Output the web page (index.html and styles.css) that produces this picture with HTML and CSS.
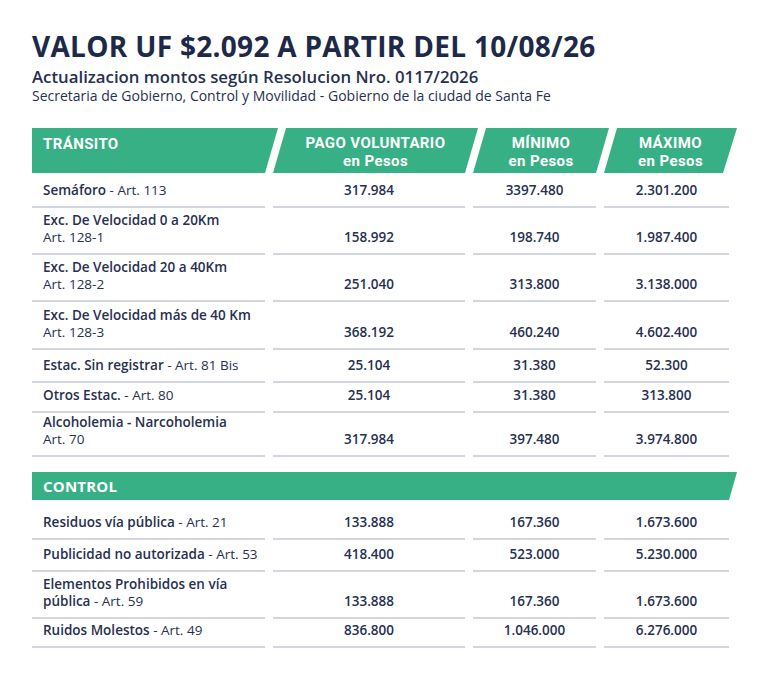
FILE: index.html
```html
<!DOCTYPE html>
<html lang="es">
<head>
<meta charset="utf-8">
<title>Valor UF</title>
<link rel="stylesheet" href="styles.css">
</head>
<body>
<div class="page">
  <header class="intro">
    <h1 class="title">VALOR UF $2.092 A PARTIR DEL 10/08/26</h1>
    <p class="subtitle">Actualizacion montos según Resolucion Nro. 0117/2026</p>
    <p class="source">Secretaria de Gobierno, Control y Movilidad - Gobierno de la ciudad de Santa Fe</p>
  </header>

  <div class="table">
    <div class="th th-first">TRÁNSITO</div>
    <div class="th">PAGO VOLUNTARIO<br>en Pesos</div>
    <div class="th">MÍNIMO<br>en Pesos</div>
    <div class="th th-last">MÁXIMO<br>en Pesos</div>

    <div class="td name"><span><b>Semáforo</b> - Art. 113</span></div>
    <div class="td num">317.984</div>
    <div class="td num">3397.480</div>
    <div class="td num">2.301.200</div>

    <div class="td name"><span><b>Exc. De Velocidad 0 a 20Km</b><br>Art. 128-1</span></div>
    <div class="td num">158.992</div>
    <div class="td num">198.740</div>
    <div class="td num">1.987.400</div>

    <div class="td name"><span><b>Exc. De Velocidad 20 a 40Km</b><br>Art. 128-2</span></div>
    <div class="td num">251.040</div>
    <div class="td num">313.800</div>
    <div class="td num">3.138.000</div>

    <div class="td name"><span><b>Exc. De Velocidad más de 40 Km</b><br>Art. 128-3</span></div>
    <div class="td num">368.192</div>
    <div class="td num">460.240</div>
    <div class="td num">4.602.400</div>

    <div class="td name"><span><b>Estac. Sin registrar</b> - Art. 81 Bis</span></div>
    <div class="td num">25.104</div>
    <div class="td num">31.380</div>
    <div class="td num">52.300</div>

    <div class="td name"><span><b>Otros Estac.</b> - Art. 80</span></div>
    <div class="td num">25.104</div>
    <div class="td num">31.380</div>
    <div class="td num">313.800</div>

    <div class="td name"><span><b>Alcoholemia - Narcoholemia</b><br>Art. 70</span></div>
    <div class="td num">317.984</div>
    <div class="td num">397.480</div>
    <div class="td num">3.974.800</div>

    <div class="section">CONTROL</div>

    <div class="td name"><span><b>Residuos vía pública</b> - Art. 21</span></div>
    <div class="td num">133.888</div>
    <div class="td num">167.360</div>
    <div class="td num">1.673.600</div>

    <div class="td name"><span><b>Publicidad no autorizada</b> - Art. 53</span></div>
    <div class="td num">418.400</div>
    <div class="td num">523.000</div>
    <div class="td num">5.230.000</div>

    <div class="td name"><span><b>Elementos Prohibidos en vía<br>pública</b> - Art. 59</span></div>
    <div class="td num">133.888</div>
    <div class="td num">167.360</div>
    <div class="td num">1.673.600</div>

    <div class="td name"><span><b>Ruidos Molestos</b> - Art. 49</span></div>
    <div class="td num">836.800</div>
    <div class="td num">1.046.000</div>
    <div class="td num">6.276.000</div>
  </div>
</div>
</body>
</html>
```

FILE: styles.css
```css
* { box-sizing: border-box; }

html, body {
  margin: 0;
  padding: 0;
  background: #ffffff;
}

body {
  font-family: "Open Sans", "Noto Sans", sans-serif;
  color: #27304f;
}

.page {
  padding: 30px 0 0 32px;
  width: 768px;
}

.intro {
  margin-bottom: 23px;
}

.title {
  margin: 0;
  font-size: 28px;
  line-height: 32px;
  font-weight: 700;
  color: #1e2949;
  letter-spacing: 0.3px;
}

.subtitle {
  margin: 4px 0 0;
  font-size: 16.8px;
  line-height: 21px;
  font-weight: 600;
  color: #27304f;
}

.source {
  margin: 0;
  font-size: 14px;
  line-height: 18px;
  font-weight: 400;
  color: #27304f;
}

.table {
  display: grid;
  grid-template-columns: 233px 192px 123px 125px;
  column-gap: 8px;
  grid-template-rows: 45px 35px 47px 47px 48px 33px 30px 44px 43px 40px 32px 47px 29px;
  width: 705px;
}

.th {
  background: #37b085;
  color: #ffffff;
  font-family: Roboto, "Open Sans", sans-serif;
  font-weight: 700;
  font-size: 15px;
  line-height: 17.6px;
  letter-spacing: 0.4px;
  text-align: center;
  padding-top: 7px;
  margin-right: -13px;
  clip-path: polygon(13px 0, 100% 0, calc(100% - 13px) 100%, 0 100%);
}

.th-first {
  text-align: left;
  padding-left: 11px;
  padding-top: 8px;
  clip-path: polygon(0 0, 100% 0, calc(100% - 13px) 100%, 0 100%);
}

.th-last {
  margin-right: -8px;
  clip-path: polygon(13px 0, 100% 0, calc(100% - 14px) 100%, 0 100%);
}

.td {
  display: flex;
  align-items: flex-end;
  padding-bottom: 7px;
  border-bottom: 2px solid #d3d6de;
  font-size: 13.5px;
  line-height: 17px;
}

.name {
  padding-left: 11px;
  font-weight: 400;
}

.name b {
  font-weight: 600;
}

.num {
  justify-content: center;
  font-size: 13.5px;
  font-weight: 600;
}

.section {
  grid-column: 1 / -1;
  align-self: end;
  height: 28px;
  background: #37b085;
  color: #ffffff;
  font-weight: 700;
  font-size: 15px;
  letter-spacing: 0.2px;
  line-height: 28px;
  padding-left: 11px;
  margin-right: -8px;
  clip-path: polygon(0 0, 100% 0, calc(100% - 8px) 100%, 0 100%);
}
```
